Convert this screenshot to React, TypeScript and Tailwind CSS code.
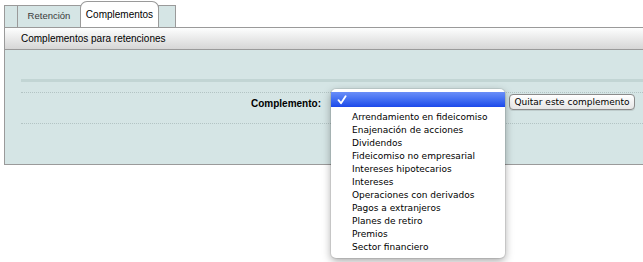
import React from "react"

const options = [
  "Arrendamiento en fideicomiso",
  "Enajenación de acciones",
  "Dividendos",
  "Fideicomiso no empresarial",
  "Intereses hipotecarios",
  "Intereses",
  "Operaciones con derivados",
  "Pagos a extranjeros",
  "Planes de retiro",
  "Premios",
  "Sector financiero",
]

function SelectMenu() {
  return (
    <div className="absolute left-0 top-[-5px] z-10 w-[174px] h-[169px] rounded-[5px] bg-white pt-[3px] pb-[4px] shadow-[0_3px_8px_rgba(0,0,0,0.35),0_0_0_1px_rgba(0,0,0,0.08)] font-['DejaVu_Sans',sans-serif] text-[9px] text-black">
      <div className="flex h-[15px] items-center bg-gradient-to-b from-[#6a8ef8] to-[#1c48ea] pl-[6px]">
        <svg className="w-[10px] h-[10px]" viewBox="0 0 10 10" fill="none">
          <path d="M1.5 5.2 L4 8.2 L8.6 1.2" stroke="white" strokeWidth="1.8" strokeLinecap="round" strokeLinejoin="round" />
        </svg>
      </div>
      <ul className="mt-[4px]">
        {options.map((o) => (
          <li key={o} className="h-[13px] leading-[13px] pl-[21px] whitespace-nowrap">
            {o}
          </li>
        ))}
      </ul>
    </div>
  )
}

export default function App() {
  return (
    <div className="relative w-[643px] h-[262px] overflow-hidden bg-white font-['Liberation_Sans',Arial,sans-serif]">
      {/* Tabs */}
      <div className="flex items-end h-[27px] pl-[4px]">
        <div className="w-[14px] h-[22px] border border-b-0 border-[#9a9a9a] bg-[#d5e5e5]" />
        <div className="flex items-center justify-center w-[64px] h-[22px] -ml-px border border-b-0 border-[#9a9a9a] bg-[#d5e5e5] text-[9.5px] text-[#3a3a3a]">
          Retención
        </div>
        <div className="flex items-center justify-center w-[79px] h-[26px] -ml-px border border-b-0 border-[#9a9a9a] rounded-t-[7px] bg-white text-[10px] text-black">
          Complementos
        </div>
        <div className="w-[18px] h-[22px] -ml-px border border-b-0 border-[#9a9a9a] bg-[#d5e5e5]" />
      </div>

      {/* Header bar */}
      <div className="ml-[4px] h-[23px] border-y border-l border-[#9a9a9a] bg-gradient-to-b from-[#fdfefe] to-[#d6d6d6] pl-[16px] flex items-center text-[10px] text-black">
        Complementos para retenciones
      </div>

      {/* Body */}
      <div className="ml-[4px] h-[115px] border-l border-b border-[#9a9a9a] bg-[#d5e5e5] pl-[16px] pt-[29px]">
        <div className="h-[3px] bg-[#c2d5d4]" />
        <div className="mt-[10px] border-t border-dotted border-[#b3c4c4]" />
        <div className="flex h-[30px] pt-[1px]">
          <div className="w-[300px] pt-[2px] text-right text-[10px] font-bold text-black">Complemento:</div>
          <div className="relative ml-[10px] w-[174px]">
            <SelectMenu />
          </div>
          <button className="ml-[4px] h-[16px] w-[126px] rounded-[4px] border border-[#8a8a8a] bg-gradient-to-b from-white to-[#e6e6e6] font-['DejaVu_Sans',sans-serif] text-[9px] leading-[14px] text-black shadow-[0_1px_0_rgba(0,0,0,0.1)]">
            Quitar este complemento
          </button>
        </div>
        <div className="border-t border-dotted border-[#b3c4c4]" />
      </div>
    </div>
  )
}
